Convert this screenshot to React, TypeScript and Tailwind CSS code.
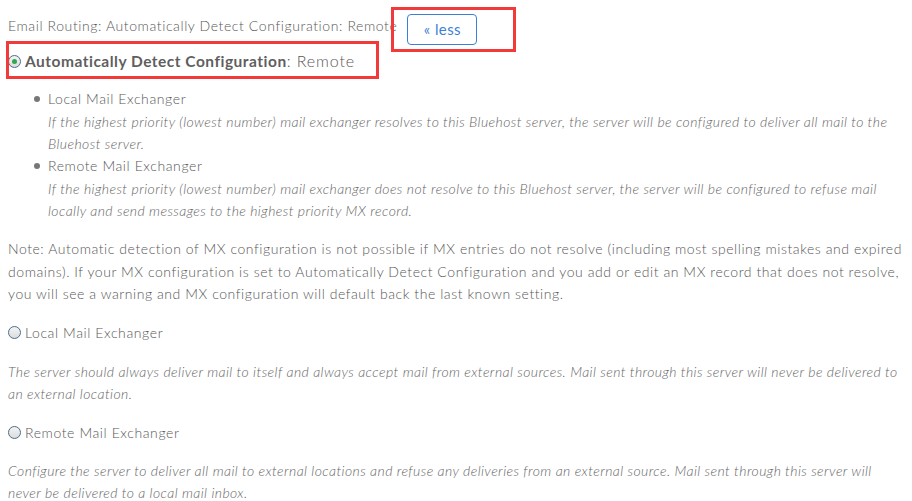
import React from "react";

const Radio = ({ checked = false }: { checked?: boolean }) => (
  <span className="inline-flex h-[13px] w-[13px] shrink-0 items-center justify-center rounded-full border border-[#4a6d8c] bg-gradient-to-b from-[#f4f4f4] to-[#dcdcdc]">
    {checked && <span className="h-[5px] w-[5px] rounded-full bg-[#2fa84f]" />}
  </span>
);

const App = () => {
  return (
    <div
      className="relative min-h-[501px] w-[912px] bg-white pl-[8px] pt-[14px] text-[14px] font-light tracking-[0.6px] text-[#585858]"
      style={{ fontFamily: "Lato, 'Open Sans', sans-serif" }}
    >
      {/* heading row */}
      <div className="flex items-start">
        <div className="mt-[1px] leading-[22px]">
          Email Routing: Automatically Detect Configuration: Remote
        </div>
        <button className="ml-[10px] h-[31px] w-[70px] rounded-[4px] border border-[#3d7fd6] text-[15px] font-normal tracking-[0.4px] text-[#3d7fd6]">
          « less
        </button>
      </div>

      <div className="mt-[5px] flex items-center gap-[4px] leading-[22px]">
        <Radio checked />
        <span className="text-[16px] tracking-[0.9px]">
          <span className="text-[15.5px] font-bold tracking-[0.5px] text-[#5f5f5f]">Automatically Detect Configuration</span>: Remote
        </span>
      </div>

      <ul className="mt-[16px] pl-[40px] leading-[22px]">
        <li className="relative">
          <span className="absolute left-[-14px] top-[8px] h-[6px] w-[6px] rounded-full bg-[#777]" />
          Local Mail Exchanger
          <div className="mt-[1px] text-[14px] italic tracking-[0.42px] text-[#666]">
            If the highest priority (lowest number) mail exchanger resolves to this Bluehost server, the server will be configured to deliver all mail to the
            <br />
            Bluehost server.
          </div>
        </li>
        <li className="relative">
          <span className="absolute left-[-14px] top-[8px] h-[6px] w-[6px] rounded-full bg-[#777]" />
          Remote Mail Exchanger
          <div className="mt-[1px] text-[14px] italic tracking-[0.42px] text-[#666]">
            If the highest priority (lowest number) mail exchanger does not resolve to this Bluehost server, the server will be configured to refuse mail
            <br />
            locally and send messages to the highest priority MX record.
          </div>
        </li>
      </ul>

      <p className="mt-[16px] leading-[22.5px] tracking-[0.56px]">
        Note: Automatic detection of MX configuration is not possible if MX entries do not resolve (including most spelling mistakes and expired
        <br />
        domains). If your MX configuration is set to Automatically Detect Configuration and you add or edit an MX record that does not resolve,
        <br />
        you will see a warning and MX configuration will default back the last known setting.
      </p>

      <div className="mt-[16px] flex items-center gap-[4px] leading-[22px]">
        <Radio />
        <span>Local Mail Exchanger</span>
      </div>
      <p className="mt-[17px] text-[14px] italic leading-[22px] tracking-[0.42px] text-[#666]">
        The server should always deliver mail to itself and always accept mail from external sources. Mail sent through this server will never be delivered to
        <br />
        an external location.
      </p>

      <div className="mt-[17px] flex items-center gap-[4px] leading-[22px]">
        <Radio />
        <span>Remote Mail Exchanger</span>
      </div>
      <p className="mt-[16px] text-[14px] italic leading-[22px] tracking-[0.42px] text-[#666]">
        Configure the server to deliver all mail to external locations and refuse any deliveries from an external source. Mail sent through this server will
        <br />
        never be delivered to a local mail inbox.
      </p>

      {/* annotation boxes */}
      <div className="pointer-events-none absolute left-[391px] top-[7px] h-[45px] w-[125px] border-[3px] border-[#f23a3a]" />
      <div className="pointer-events-none absolute left-[6px] top-[41px] h-[38px] w-[373px] border-[3px] border-[#f23a3a]" />
    </div>
  );
};

export default App;
